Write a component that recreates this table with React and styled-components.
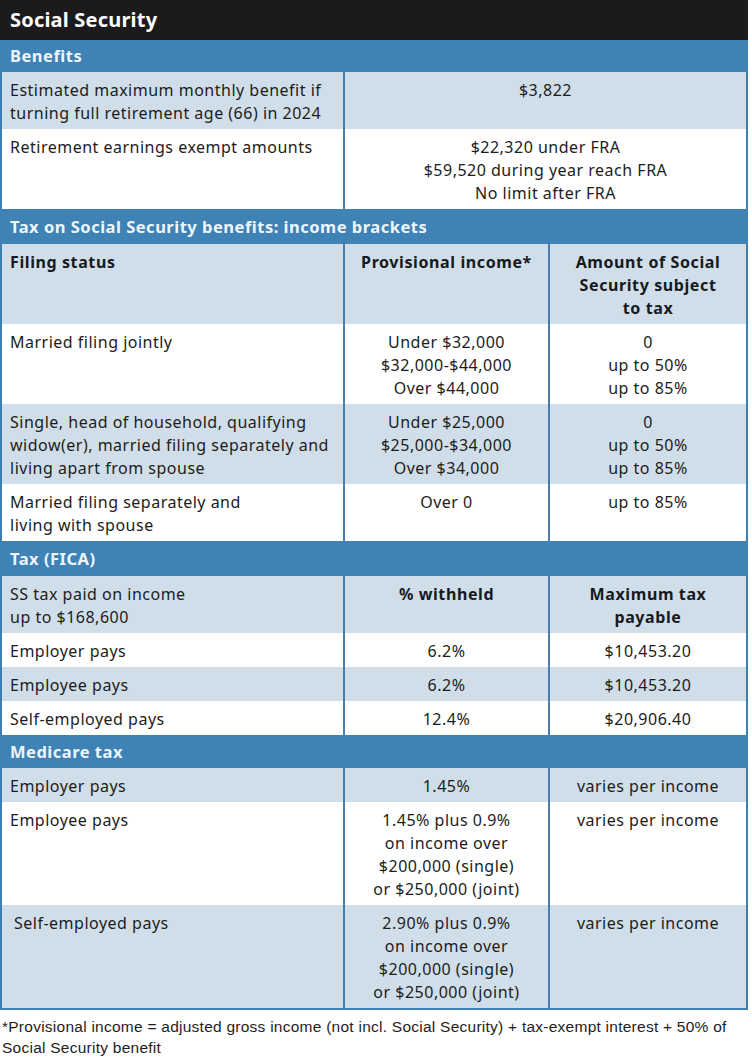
import React from 'react'
import styled, { createGlobalStyle } from 'styled-components';

const GlobalStyle = createGlobalStyle`
  body {
    margin: 0;
    background: #ffffff;
    font-family: "Noto Sans", "Open Sans", sans-serif;
    color: #1c1c1c;
  }
`

const App = () => {
    return(
    <Page>
    <GlobalStyle/>
    <TitleBar>Social Security</TitleBar>
    <Table>
      <SectionBar $h={32}>Benefits</SectionBar>
      <Row $cols={2} $shaded>
        <Cell>Estimated maximum monthly benefit if<br/>turning full retirement age (66) in 2024</Cell>
        <Cell $center>$3,822</Cell>
      </Row>
      <Row $cols={2}>
        <Cell>Retirement earnings exempt amounts</Cell>
        <Cell $center>$22,320 under FRA<br/>$59,520 during year reach FRA<br/>No limit after FRA</Cell>
      </Row>

      <SectionBar $h={35}>Tax on Social Security benefits: income brackets</SectionBar>
      <Row $shaded>
        <Cell $bold>Filing status</Cell>
        <Cell $bold $center>Provisional income*</Cell>
        <Cell $bold $center>Amount of Social<br/>Security subject<br/>to tax</Cell>
      </Row>
      <Row>
        <Cell>Married filing jointly</Cell>
        <Cell $center>Under $32,000<br/>$32,000-$44,000<br/>Over $44,000</Cell>
        <Cell $center>0<br/>up to 50%<br/>up to 85%</Cell>
      </Row>
      <Row $shaded>
        <Cell>Single, head of household, qualifying<br/>widow(er), married filing separately and<br/>living apart from spouse</Cell>
        <Cell $center>Under $25,000<br/>$25,000-$34,000<br/>Over $34,000</Cell>
        <Cell $center>0<br/>up to 50%<br/>up to 85%</Cell>
      </Row>
      <Row>
        <Cell>Married filing separately and<br/>living with spouse</Cell>
        <Cell $center>Over 0</Cell>
        <Cell $center>up to 85%</Cell>
      </Row>

      <SectionBar $h={35}>Tax (FICA)</SectionBar>
      <Row $shaded>
        <Cell>SS tax paid on income<br/>up to $168,600</Cell>
        <Cell $bold $center>% withheld</Cell>
        <Cell $bold $center>Maximum tax<br/>payable</Cell>
      </Row>
      <Row>
        <Cell>Employer pays</Cell>
        <Cell $center>6.2%</Cell>
        <Cell $center>$10,453.20</Cell>
      </Row>
      <Row $shaded>
        <Cell>Employee pays</Cell>
        <Cell $center>6.2%</Cell>
        <Cell $center>$10,453.20</Cell>
      </Row>
      <Row>
        <Cell>Self-employed pays</Cell>
        <Cell $center>12.4%</Cell>
        <Cell $center>$20,906.40</Cell>
      </Row>

      <SectionBar $h={33}>Medicare tax</SectionBar>
      <Row $shaded>
        <Cell>Employer pays</Cell>
        <Cell $center>1.45%</Cell>
        <Cell $center>varies per income</Cell>
      </Row>
      <Row>
        <Cell>Employee pays</Cell>
        <Cell $center>1.45% plus 0.9%<br/>on income over<br/>$200,000 (single)<br/>or $250,000 (joint)</Cell>
        <Cell $center>varies per income</Cell>
      </Row>
      <Row $shaded>
        <Cell $indent>Self-employed pays</Cell>
        <Cell $center>2.90% plus 0.9%<br/>on income over<br/>$200,000 (single)<br/>or $250,000 (joint)</Cell>
        <Cell $center>varies per income</Cell>
      </Row>
    </Table>
    <Footnote>*Provisional income = adjusted gross income (not incl. Social Security) + tax-exempt interest + 50% of<br/>Social Security benefit</Footnote>
    </Page>
    );
};

export default App;

const Page = styled.div`
width: 748px;
`
const TitleBar = styled.div`
height: 40px;
background-color: #1c1a1b;
color: #ffffff;
font-weight: 700;
font-size: 20px;
line-height: 40px;
padding-left: 10px;
box-sizing: border-box;
letter-spacing: 0.2px;
`
const Table = styled.div`
border-left: 2px solid #3f7fb0;
border-right: 2px solid #3f7fb0;
border-bottom: 2px solid #3f7fb0;
`
const SectionBar = styled.div`
height: ${p => p.$h}px;
line-height: ${p => p.$h}px;
background-color: #3e82b6;
color: #eef6fc;
font-weight: 700;
font-size: 16.5px;
letter-spacing: 0.5px;
margin: 0 -2px;
padding-left: 10px;
`
const Row = styled.div`
display: grid;
grid-template-columns: ${p => p.$cols === 2 ? '341px 1fr' : '341px 205px 1fr'};
background-color: ${p => p.$shaded ? '#d0dee9' : '#ffffff'};
`
const Cell = styled.div`
padding: 7px ${p => p.$center ? '4px' : '6px'} 4px ${p => p.$indent ? '12px' : p.$center ? '4px' : '8px'};
font-size: 16px;
line-height: 23px;
letter-spacing: ${p => p.$bold ? '0.6px' : '0.5px'};
font-weight: ${p => p.$bold ? 700 : 400};
text-align: ${p => p.$center ? 'center' : 'left'};
white-space: nowrap;
color: ${p => p.$bold ? '#161a20' : '#1c1c1c'};
& + & {
  border-left: 2px solid #4a7dab;
}
`
const Footnote = styled.p`
margin: 0;
padding: 6px 0 0 2px;
font-family: "Liberation Sans", Arial, sans-serif;
font-size: 15.5px;
line-height: 21px;
letter-spacing: 0.25px;
color: #1e1e1e;
`
